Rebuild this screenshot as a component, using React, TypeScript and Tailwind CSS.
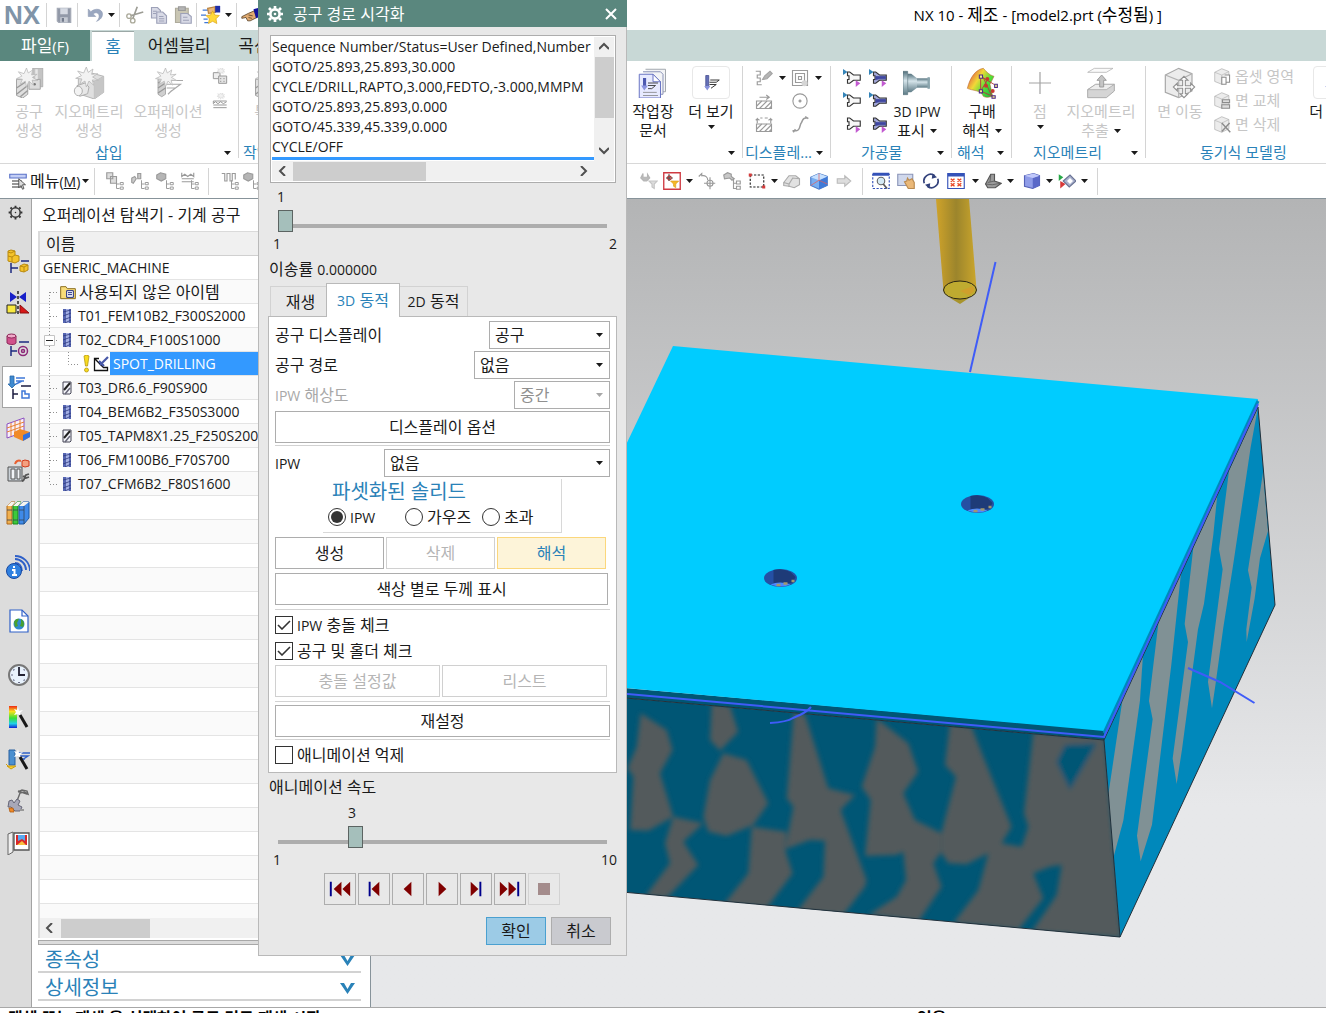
import { useState, type ReactNode } from 'react';
import clsx from 'clsx';

interface ChildrenProps {
  children: ReactNode;
}

interface IconProps {
  size?: number;
  className?: string;
  children: ReactNode;
}

// Every icon is drawn on a 24 unit grid
function Icon({ size = 18, className, children }: IconProps) {
  return (
    <svg
      width={size}
      height={size}
      viewBox="0 0 24 24"
      fill="none"
      stroke="#9a9a9a"
      strokeWidth="1.5"
      className={clsx('shrink-0', className)}
      aria-hidden="true"
    >
      {children}
    </svg>
  );
}

function Caret({ muted = false, className }: { muted?: boolean; className?: string }) {
  return (
    <svg width="7" height="4" viewBox="0 0 7 4" className={clsx('shrink-0', className)} aria-hidden="true">
      <path d="M0 0h7L3.500 4z" fill={muted ? '#a8a8a8' : '#1a1a1a'} />
    </svg>
  );
}

function Latin({ children, large = false }: ChildrenProps & { large?: boolean }) {
  return <span className={large ? 'text-[15px]' : 'text-[14px]'}>{children}</span>;
}

function Divider({ className }: { className?: string }) {
  return <span className={clsx('w-px shrink-0 bg-[#d4d4d4]', className)} />;
}

function Burst() {
  return (
    <path
      d="M10 0l1.400 4L15 1.500l-1 4 4.500-.5-3.800 2.500L19 10l-4.500-.3 1 4L12 10.500 10 15l-1-4.500L5 13l1.700-4L2 8.500l4.300-2L3.500 3 8 4.500z"
      fill="#f2f2f2"
      stroke="#b8b8b8"
      strokeWidth=".6"
    />
  );
}

/* ---------- quick access bar ---------- */

function SaveIcon() {
  return (
    <Icon size={18}>
      <path d="M3 3h18v19H5l-2-2z" fill="#9299a8" stroke="#a3a9b5" />
      <path d="M7 3h10v8H7z" fill="#d5d9e2" stroke="none" />
      <path d="M7 15h10v7H7z" fill="#c5cad3" stroke="none" />
      <path d="M9 16h3v5H9z" fill="#737b8c" stroke="none" />
    </Icon>
  );
}

function UndoIcon() {
  return (
    <Icon size={18}>
      <path d="M3 4v10h10L9.500 10.500c4-3 8-1 8 3 0 3-1.500 5-3.500 7 5-2 8-5.500 8-9.500C22 4 13 2 6.500 7.500z" fill="#9aa7c0" stroke="#8f9bb4" strokeWidth=".8" />
    </Icon>
  );
}

function CutIcon() {
  return (
    <Icon size={18}>
      <path d="M15 1L9 17M23 8L6 13" stroke="#9c9c94" strokeWidth="2.200" />
      <circle cx="4" cy="13.500" r="3" stroke="#aaa99a" strokeWidth="1.800" />
      <circle cx="9" cy="19.500" r="3" stroke="#aaa99a" strokeWidth="1.800" />
    </Icon>
  );
}

function CopyIcon() {
  return (
    <Icon size={18}>
      <path d="M2 2h8l4 4v10H2z" fill="#d8dae6" stroke="#9da1b8" />
      <path d="M9 8h8l5 5v10H9z" fill="#d8dae6" stroke="#9da1b8" />
      <path d="M4 7h5M4 10h4M12 14h6M12 17h7M12 20h7" stroke="#9da1b8" />
    </Icon>
  );
}

function PasteIcon() {
  return (
    <Icon size={18}>
      <path d="M2 3h17v19H2z" fill="#c9c6b4" stroke="#aeab9c" />
      <path d="M6 1h9v5H6z" fill="#b5b5b5" stroke="#999" />
      <path d="M9 10h9l5 4v9H9z" fill="#d8dae6" stroke="#9da1b8" />
      <path d="M12 15h6M12 19h8" stroke="#9da1b8" />
    </Icon>
  );
}

function StarHandIcon() {
  return (
    <Icon size={20}>
      <path d="M2 6h7M0 12h6M3 17h5M4 21h5" stroke="#3f78d8" />
      <path d="M8 4l9-2v7l-8 1z" fill="#edb878" stroke="#b98340" />
      <path d="M17 1h6v8h-6z" fill="#1f2ea8" stroke="none" />
      <path d="M14 7l2.600 5 5.400.6-4 4 1 5.600-5-2.600-5 2.600 1-5.600-4-4 5.400-.6z" fill="#ffd83a" stroke="#d8a010" strokeWidth=".8" />
    </Icon>
  );
}

function HandIcon() {
  return (
    <Icon size={20}>
      <path d="M1 14l8-4 7-3 3 8-8 4H8l-2-4-5 1z" fill="#e0aa70" stroke="#5a4228" strokeWidth="1" />
      <path d="M9 12l5 1M9 15l4 1" stroke="#5a4228" strokeWidth="1" />
      <path d="M15 5l8-2v11l-5 2z" fill="#12129c" stroke="none" />
    </Icon>
  );
}

/* ---------- ribbon icons ---------- */

function CreateToolIcon() {
  return (
    <Icon size={30}>
      <path d="M15 0h8v15h-8z" fill="#c4c4c4" stroke="#a5a5a5" strokeWidth=".6" />
      <path d="M18 1v14" stroke="#e8e8e8" strokeWidth="2" />
      <path d="M12 10l9-1v8h-9z" fill="#dcdcdc" stroke="#a5a5a5" strokeWidth=".8" />
      <circle cx="16.500" cy="13" r="1" fill="#777" stroke="none" />
      <path d="M2 9h9v12l-4 3-5-2z" fill="#dfdfdf" stroke="#a5a5a5" strokeWidth=".8" />
      <path d="M2 16l9-6M2 21l9-7M5 23l6-5" stroke="#9b9b9b" strokeWidth="1.200" />
      <Burst />
    </Icon>
  );
}

function CreateGeometryIcon() {
  return (
    <Icon size={32}>
      <path d="M4 8l8-4 11 3v12l-7 5-12-4z" fill="#dfdfdf" stroke="#b2b2b2" strokeWidth=".7" />
      <path d="M4 8l12 3v13M16 11l7-4" stroke="#b8b8b8" strokeWidth=".7" />
      <path d="M16 11l7-4v12l-7 5z" fill="#c6c6c6" stroke="none" />
      <path d="M3 14l6-2 3 3-1 5-6 2z" fill="#e8e8e8" stroke="#aaa" strokeWidth=".7" />
      <ellipse cx="4" cy="18" rx="3" ry="3.500" fill="#f3f3f3" stroke="#aaa" strokeWidth=".7" />
      <Burst />
    </Icon>
  );
}

function CreateOperationIcon() {
  return (
    <Icon size={30}>
      <path d="M4 8h6v13l-3 2-3-2z" fill="#cfcfcf" stroke="#a5a5a5" strokeWidth=".7" />
      <path d="M4 12l6-3M4 16l6-4M4 20l6-4" stroke="#979797" strokeWidth="1" />
      <path d="M11 10h13M11 13h11l-8 6M11 16h7M12 21l3-3" stroke="#a9a9a9" strokeWidth=".9" />
      <Burst />
    </Icon>
  );
}

function SmallProgramIcon({ wave = false }: { wave?: boolean }) {
  return (
    <Icon size={16}>
      {wave ? (
        <path d="M2 12h20M2 12v4l3-3 4 3 4-3 4 3 5-3M2 22h20M2 18h20" />
      ) : (
        <>
          <path d="M2 7h10v9H2z" fill="#eee" />
          <path d="M10 12h12v11H10z" fill="#e4e4e4" />
          <path d="M12 16h2M17 16h2M12 20h2M17 20h2" />
        </>
      )}
      <g transform="translate(6 -1) scale(.7)">
        <Burst />
      </g>
    </Icon>
  );
}

function ShopDocIcon() {
  return (
    <Icon size={30}>
      <path d="M6 1h16v18h-4" stroke="#a3a8ae" fill="#f3f4f6" strokeWidth=".8" />
      <path d="M4 3h14l2 2v16h-2" stroke="#8b93b8" fill="#f3f4f6" strokeWidth=".8" />
      <path d="M1 5h11l6 6v13H1z" fill="#e7eaff" stroke="#6a75c4" strokeWidth=".8" />
      <path d="M12 5l6 6h-6z" fill="#fff" stroke="#6a75c4" strokeWidth=".8" />
      <path d="M4 8h2.500v8H4z" fill="#4c58b0" stroke="none" />
      <path d="M2.500 14h5.500l-3 4z" fill="#8a93e0" stroke="none" />
      <path d="M8 12h8M8 14h6l-3 2.500H8" stroke="#333" strokeWidth=".7" />
      <path d="M4 19.500h11M4 22h12" stroke="#7b7b7b" strokeWidth=".6" />
    </Icon>
  );
}

function MoreOperationIcon() {
  return (
    <Icon size={18}>
      <path d="M5 2h4v16H5z" fill="#6470b8" stroke="#40488c" strokeWidth="1" />
      <path d="M3 16h8l-4 6z" fill="#8993dd" stroke="none" />
      <path d="M11 8h12l-4 3h-9M10 14h9l-7 5" stroke="#333" strokeWidth="1.300" />
    </Icon>
  );
}

function PathListIcon() {
  return (
    <Icon size={18}>
      <path d="M1 3h6v5H3v4h4v5H3v4h6" stroke="#9a9a9a" />
      <path d="M10 14l3-5 7-6 3 3-7 7z" fill="#b5b5b5" stroke="#a5a5a5" />
    </Icon>
  );
}

function SpiralIcon() {
  return (
    <Icon size={18}>
      <path d="M2 2h20v20H2zM6 6h12v12H6zM10 10h4v4h-4z" />
      <circle cx="18" cy="19" r="4" fill="#d5d5d5" stroke="none" />
    </Icon>
  );
}

function HatchIcon({ wide = false }: { wide?: boolean }) {
  return (
    <Icon size={18}>
      <path d="M2 12h20v10H2z" />
      <path d="M2 19l7-7M6 22l10-10M13 22l9-9M19 22l3-3" />
      <path d={wide ? 'M3 11V5l-2 2m2-2l3 2M21 11V5l2 2m-2-2l-3 2M7 4h3M13 4h4' : 'M6 7h13M15 4l4 3-4 3'} />
    </Icon>
  );
}

function CircleDotIcon() {
  return (
    <Icon size={18}>
      <circle cx="12" cy="12" r="9.500" />
      <path d="M12 10v4M10 12h4" strokeWidth="2" />
    </Icon>
  );
}

function CurveIcon() {
  return (
    <Icon size={18}>
      <path d="M2 21h5c6 0 4-8 7-11 2-3 1-6 6-6h3M3 23l3-4M19 2l4 3" strokeWidth="2" />
    </Icon>
  );
}

function WorkpieceIcon({ filled = false, blue = true, pink = true }: { filled?: boolean; blue?: boolean; pink?: boolean }) {
  return (
    <Icon size={18}>
      <path d="M6 4h3l5 4h9v7h-9l-5 4H6v-5h2V9H6z" fill={filled ? '#a3a8d8' : '#f7f7f7'} stroke="#333" strokeWidth="1.500" />
      {filled && <path d="M9 10l5 0h8v3h-8l-5 1z" fill="#3f46a0" stroke="#3f46a0" strokeWidth="1" />}
      {blue && <path d="M0 0l6 4-6 4z" fill="#3484b8" stroke="none" />}
      {pink && <path d="M17 15l6 4-6 5z" fill="#c25ad0" stroke="none" />}
    </Icon>
  );
}

function IpwIcon() {
  return (
    <Icon size={28}>
      <defs>
        <linearGradient id="steel" x1="0" x2="0" y1="0" y2="1">
          <stop offset="0" stopColor="#52707c" />
          <stop offset=".4" stopColor="#d5e4ea" />
          <stop offset="1" stopColor="#5d7b86" />
        </linearGradient>
      </defs>
      <path d="M8 8h15v8H8z" fill="url(#steel)" stroke="none" />
      <path d="M4 4h3l5 4v8l-5 4H4z" fill="url(#steel)" stroke="none" />
      <path d="M0 2h4v20H0z" fill="url(#steel)" stroke="#506b75" strokeWidth=".5" />
      <path d="M21 7h2v10h-2z" fill="#8aa4ad" stroke="none" />
    </Icon>
  );
}

function DraftAnalysisIcon() {
  return (
    <Icon size={32}>
      <defs>
        <linearGradient id="rainbow" x1="0" x2="1" y1=".2" y2=".9">
          <stop offset="0" stopColor="#e04848" />
          <stop offset=".35" stopColor="#f2d838" />
          <stop offset=".65" stopColor="#4ee038" />
          <stop offset="1" stopColor="#20b040" />
        </linearGradient>
      </defs>
      <path d="M1 16C3 8 7 2 13 1c2 2 4 5 8 6l-3 6 2 9c-4 1-5 1-7 0-2-5-8-4-12-6z" fill="url(#rainbow)" stroke="#b7652c" strokeWidth=".4" />
      <path d="M11 7l10 6M11 7v11l9 4M13 8l6 13M11 18l5-8" stroke="#b43a3a" strokeWidth=".7" />
      <g fill="#c73a30" stroke="none">
        <circle cx="16" cy="9" r="1.500" />
        <circle cx="15" cy="14" r="1.500" />
        <circle cx="20" cy="18" r="1.500" />
      </g>
      <g fill="#f5e98a" stroke="#4c2a88" strokeWidth=".8">
        <path d="M10 6h2.400v2.400H10zM10 17h2.400v2.400H10zM21.500 13h2v2.400h-2zM19.500 21.500h2.400v2h-2.400z" />
      </g>
    </Icon>
  );
}

function PointIcon() {
  return (
    <Icon size={24}>
      <path d="M12 1v22M1 12h22" stroke="#a3a3a3" strokeWidth="1.200" />
    </Icon>
  );
}

function ExtractIcon() {
  return (
    <Icon size={32}>
      <path d="M2 4l5-3h14l-5 3z" fill="#fafafa" stroke="#b5b5b5" strokeWidth=".6" />
      <path d="M2 17l6-4h14v5l-6 5H2z" fill="#d5d5d5" stroke="#a8a8a8" strokeWidth=".7" />
      <path d="M2 17l6-4h14l-6 4z" fill="#ededed" stroke="#a8a8a8" strokeWidth=".6" />
      <path d="M11 15v-5H9l3.500-4L16 10h-2v5z" fill="#c5c5c5" stroke="#999" strokeWidth=".7" />
    </Icon>
  );
}

function CubeShape() {
  return (
    <>
      <path d="M1 6l10-5 10 4v13l-10 5-10-4z" fill="#ececec" stroke="#a8a8a8" strokeWidth=".9" />
      <path d="M1 6l10 4 10-5M11 10v13" stroke="#b2b2b2" strokeWidth=".9" />
    </>
  );
}

function MoveFaceIcon() {
  return (
    <Icon size={32}>
      <CubeShape />
      <path d="M15 7l3 3h-2v4h4v-2l3 3-3 3v-2h-4v4h2l-3 3-3-3h2v-4h-4v2l-3-3 3-3v2h4v-4h-2z" fill="#fff" stroke="#8f8f8f" strokeWidth=".8" />
    </Icon>
  );
}

function FaceIcon({ mark }: { mark: 'offset' | 'replace' | 'delete' }) {
  return (
    <Icon size={17}>
      <CubeShape />
      {mark === 'offset' && <path d="M11 13h6v10h-6zM15 10h7v10h-5" fill="#fff" stroke="#8c8c8c" />}
      {mark === 'replace' && <path d="M12 11h10v4H12zM11 18h11v5H11z" fill="#ddd" stroke="#8c8c8c" />}
      {mark === 'delete' && <path d="M11 10l12 13M22 10L11 22" stroke="#8c8c8c" strokeWidth="2" />}
    </Icon>
  );
}

function NodeIcon({ kind }: { kind: number }) {
  return (
    <Icon size={18}>
      {kind === 0 && <path d="M1 1h8v8H1zM6 6h8v9H6z" fill="#ddd" />}
      {kind === 1 && <path d="M1 14V8l4-2 2 3-4 6zM9 2h4v7H9z" fill="#ccc" />}
      {kind === 2 && <path d="M1 4l5-3 7 2v6l-6 3-6-3z" fill="#b5b5b5" />}
      {kind === 3 && <path d="M1 1v5l4-3 4 3 4-3 4 3V1M1 13h16M1 9h16" />}
      {kind === 4 && <path d="M1 2h4v10h3V2h4v10h3V2h4v8" />}
      <path d="M14 11v11h4M14 16h4M19 14h4v3h-4zM19 20h4v3h-4z" strokeWidth="1.300" />
    </Icon>
  );
}

/* ---------- header ---------- */

function TitleBar() {
  return (
    <div className="flex h-[30px] shrink-0 items-center bg-white pl-1 text-black">
      <span className="w-[42px] font-['Liberation_Sans',sans-serif] text-[26px] leading-none font-bold text-[#8094a8]">NX</span>
      <Divider className="h-6" />
      <button className="ml-2" aria-label="저장"><SaveIcon /></button>
      <Divider className="ml-1 h-6" />
      <button className="ml-2" aria-label="실행 취소"><UndoIcon /></button>
      <Caret className="ml-1" />
      <Divider className="ml-1 h-6" />
      <button className="ml-1.5" aria-label="잘라내기"><CutIcon /></button>
      <button className="ml-1.5" aria-label="복사"><CopyIcon /></button>
      <button className="ml-1.5" aria-label="붙여넣기"><PasteIcon /></button>
      <Divider className="ml-1 h-6" />
      <button className="ml-1" aria-label="명령"><StarHandIcon /></button>
      <Caret className="ml-1" />
      <Divider className="ml-1 h-6" />
      <button className="ml-1" aria-label="선택"><HandIcon /></button>
      <h1 className="mr-[164px] ml-auto text-[17px] whitespace-nowrap">
        <Latin large>NX 10 - </Latin>제조<Latin large> - [model2.prt (</Latin>수정됨<Latin large>) ]</Latin>
      </h1>
    </div>
  );
}

function RibbonTabs() {
  return (
    <nav className="flex h-[31px] shrink-0 bg-[#c8d8d6] text-[17px]">
      <button className="mr-0.5 w-[90px] bg-[#5a877e] text-white">파일<Latin large>(F)</Latin></button>
      <button className="mt-px w-[42px] border-t border-[#9ba8a6] bg-white text-[#2a82b8]">홈</button>
      <button className="w-[90px] whitespace-nowrap">어셈블리</button>
      <button className="w-[60px] whitespace-nowrap">곡선</button>
    </nav>
  );
}

interface RibbonGroupProps {
  label: string;
  className: string;
  labelClass?: string;
  caret?: boolean;
  children: ReactNode;
}

function RibbonGroup({ label, className, labelClass = 'justify-center', caret = true, children }: RibbonGroupProps) {
  return (
    <section className={clsx('relative flex shrink-0 flex-col pt-[5px]', className)}>
      <div className="flex h-[76px]">{children}</div>
      <div className={clsx('flex h-5 items-center text-[15px] leading-5 text-[#2a82b8]', labelClass)}>
        <h2>{label}</h2>
      </div>
      {caret && <Caret className="absolute right-2 bottom-2" />}
      <Divider className="absolute top-[5px] right-0 h-[92px]" />
    </section>
  );
}

interface BigButtonProps {
  icon: ReactNode;
  lines: ReactNode[];
  className: string;
  disabled?: boolean;
  caret?: boolean;
  framed?: boolean;
}

function BigButton({ icon, lines, className, disabled, caret, framed }: BigButtonProps) {
  return (
    <button
      disabled={disabled}
      className={clsx('flex shrink-0 flex-col items-center text-[15px] leading-[19px] whitespace-nowrap', disabled ? 'text-[#c6c6c6]' : 'text-[#1a1a1a]', className)}
    >
      <span className={clsx('mb-[3px] flex h-[33px] items-center justify-center', framed && 'w-[38px] rounded-sm border border-[#e8e8e8]')}>{icon}</span>
      {lines.map((line, i) => (
        <span key={i} className="flex items-center gap-[5px]">
          {line}
          {caret && i > 0 && i === lines.length - 1 && <Caret />}
        </span>
      ))}
      {caret && lines.length === 1 && <Caret className="mt-1" />}
    </button>
  );
}

function Ribbon() {
  return (
    <div className="flex h-[103px] shrink-0 overflow-hidden border-b border-[#d8d8d8] bg-white">
      <RibbonGroup label="삽입" className="w-[239px]" labelClass="pl-[95px]">
        <BigButton className="w-[58px]" disabled icon={<CreateToolIcon />} lines={['공구', '생성']} />
        <BigButton className="w-[62px]" disabled icon={<CreateGeometryIcon />} lines={['지오메트리', '생성']} />
        <BigButton className="ml-[17px] w-[62px]" disabled icon={<CreateOperationIcon />} lines={['오퍼레이션', '생성']} />
        <div className="ml-[13px] flex flex-col gap-[9px] pt-0.5">
          <SmallProgramIcon />
          <SmallProgramIcon wave />
        </div>
      </RibbonGroup>

      <RibbonGroup label="작업" className="w-[504px]" labelClass="pl-1">
        <BigButton className="w-[58px]" disabled icon={<CreateToolIcon />} lines={['특성']} />
        <BigButton className="ml-auto w-[58px]" icon={<ShopDocIcon />} lines={['작업장', '문서']} />
        <BigButton className="mr-[3px] w-[58px]" framed caret icon={<MoreOperationIcon />} lines={['더 보기']} />
      </RibbonGroup>

      <RibbonGroup label="디스플레..." className="w-[88px]" labelClass="pl-0.5">
        <div className="ml-3 grid h-[70px] grid-cols-[30px_20px] items-center gap-x-[6px]">
          <span className="flex items-center gap-1.5"><PathListIcon /><Caret /></span>
          <span className="flex items-center gap-1.5"><SpiralIcon /><Caret /></span>
          <HatchIcon />
          <CircleDotIcon />
          <HatchIcon wide />
          <CurveIcon />
        </div>
      </RibbonGroup>

      <RibbonGroup label="가공물" className="w-[121px]" labelClass="pl-[30px]">
        <div className="ml-3 grid h-[70px] grid-cols-[18px_18px] items-center gap-x-2">
          <WorkpieceIcon />
          <WorkpieceIcon filled />
          <WorkpieceIcon pink={false} />
          <WorkpieceIcon filled pink={false} />
          <WorkpieceIcon blue={false} />
          <WorkpieceIcon filled blue={false} />
        </div>
        <BigButton className="ml-px w-[58px]" caret icon={<IpwIcon />} lines={[<Latin key="ipw">3D IPW</Latin>, '표시']} />
      </RibbonGroup>

      <RibbonGroup label="해석" className="w-[60px]" labelClass="pl-[5px]">
        <BigButton className="w-[60px]" caret icon={<DraftAnalysisIcon />} lines={['구배', '해석']} />
      </RibbonGroup>

      <RibbonGroup label="지오메트리" className="w-[134px]" labelClass="pl-[21px]">
        <BigButton className="w-[56px]" disabled caret icon={<PointIcon />} lines={['점']} />
        <BigButton className="w-[66px]" disabled caret icon={<ExtractIcon />} lines={['지오메트리', '추출']} />
      </RibbonGroup>

      <RibbonGroup label="동기식 모델링" className="w-[230px]" labelClass="pl-[54px]" caret={false}>
        <BigButton className="w-[68px]" disabled icon={<MoveFaceIcon />} lines={['면 이동']} />
        <div className="flex h-[68px] w-[88px] flex-col justify-between text-[15px] leading-5 whitespace-nowrap text-[#c6c6c6]">
          <button disabled className="flex items-center gap-1"><FaceIcon mark="offset" />옵셋 영역</button>
          <button disabled className="flex items-center gap-1"><FaceIcon mark="replace" />면 교체</button>
          <button disabled className="flex items-center gap-1"><FaceIcon mark="delete" />면 삭제</button>
        </div>
        <BigButton className="ml-px w-[58px]" framed caret icon={<MoreOperationIcon />} lines={['더 보기']} />
      </RibbonGroup>
    </div>
  );
}

function SelectionBar() {
  return (
    <div className="flex h-[35px] shrink-0 items-center overflow-hidden border-b border-[#87939a] bg-white">
      <button className="flex items-center pl-[9px] text-[16px] whitespace-nowrap">
        <Icon>
          <path d="M1 3h22v5H1z" fill="#c3cef5" stroke="#5a72c8" />
          <path d="M4 12h13M4 16h13M4 20h13" stroke="#333" />
          <path d="M13 9v12l3-3 2 5 2-1-2-5h4z" fill="#ddd" stroke="#333" strokeWidth="1" />
        </Icon>
        <span className="ml-[3px]">메뉴<Latin>(<u>M</u>)</Latin></span>
        <Caret className="ml-0.5" />
      </button>
      <Divider className="ml-[5px] h-[27px]" />
      <div className="ml-[11px] flex gap-[7px]">
        {[0, 1, 2, 3].map(kind => <NodeIcon key={kind} kind={kind} />)}
      </div>
      <Divider className="ml-[9px] h-[27px]" />
      <div className="ml-3 flex gap-1">
        <NodeIcon kind={4} />
        <NodeIcon kind={2} />
      </div>

      <div className="ml-[379px] flex shrink-0 items-center gap-[5px]">
        <Icon>
          <path d="M4 2v5h6V3l3 5-4 4H5L1 8z" fill="#bbb" stroke="#b5b5b5" />
          <path d="M12 12h11l-4 4v6l-3-2v-4z" fill="#ddd" stroke="#c5c5c5" />
        </Icon>
        <Icon>
          <path d="M1 1h22v22H1z" stroke="#cf3a42" strokeWidth="1.800" />
          <path d="M8 3v9M4 8h9" stroke="#333" />
          <circle cx="8.500" cy="8" r="2.500" stroke="#b03838" />
          <path d="M10 12h11l-4 4v5l-3-2v-3z" fill="#f4b828" stroke="#d89818" strokeWidth=".8" />
        </Icon>
        <Caret />
        <Icon>
          <path d="M1 6l4-4v3c5-1 8 2 8 6M16 7v16M8 15h15" stroke="#999" />
          <circle cx="16" cy="15" r="4" />
        </Icon>
        <Icon className="ml-0.5">
          <path d="M1 4l5-3 5 2v3l4 3-3 2-3-3-7 1z" fill="#c8c8c8" />
          <path d="M14 9v13h4M14 15h4M18 12h5v4h-5zM18 19h5v4h-5z" />
        </Icon>
        <Icon className="ml-0.5">
          <path d="M3 4h18v16H3z" stroke="#222" strokeDasharray="3 2" />
          <path d="M1 2h4v4H1zM19 18h4v4h-4z" fill="#d63a3a" stroke="none" />
        </Icon>
        <Caret />
        <Icon>
          <path d="M1 14l7-9h9l5 4v8l-7 4-7-2-7-1z" fill="#e2e2e2" stroke="#aaa" />
          <path d="M1 14l7 2 5-8 9 1M8 16v4M13 8l-5 8" stroke="#aaa" />
        </Icon>
        <Icon className="ml-1">
          <path d="M1 7l11-5 11 4v12l-11 5-11-5z" fill="#79aef0" stroke="#4a7ac8" />
          <path d="M12 11l11-5v12l-11 5z" fill="#3f7ad8" stroke="none" />
          <path d="M1 7l11-5 11 4-11 5z" fill="#c5e0ff" stroke="none" />
          <path d="M12 2v9L1 18M12 11l11 5" stroke="#e06060" strokeWidth="1" />
        </Icon>
        <Icon className="ml-0.5">
          <path d="M3 9h10V5l8 7-8 7v-4H3z" fill="#ddd" stroke="#bbb" />
        </Icon>
        <Divider className="mx-1 h-[27px]" />
        <Icon>
          <path d="M1 3h22v19H1z" stroke="#3452b8" strokeDasharray="3 2" />
          <path d="M1 1h22v4H1z" fill="#3452b8" stroke="none" />
          <circle cx="12" cy="12" r="5" fill="#d5eaf5" stroke="#666" />
          <path d="M15 16l5 6" stroke="#555" strokeWidth="2.200" />
        </Icon>
        <Icon className="ml-0.5">
          <path d="M1 3h20v15H1z" fill="#d0d8ec" stroke="#8b95b8" />
          <path d="M10 13l3-1 1-4 2 3 4-2 3 5v8h-8z" fill="#eab878" stroke="#b98a50" />
        </Icon>
        <Icon className="ml-0.5">
          <path d="M3 15a9 9 0 0 1 14-10M21 9a9 9 0 0 1-14 10" stroke="#33427c" strokeWidth="2.200" />
          <path d="M14 2l6 5-7 2zM10 22l-6-5 7-2z" fill="#33427c" stroke="none" />
        </Icon>
        <Icon className="ml-0.5">
          <path d="M1 2h22v20H1z" fill="#fff" stroke="#3452b8" />
          <path d="M1 2h22v4H1z" fill="#3452b8" stroke="none" />
          <path d="M5 9l5 4M10 9l-5 4M14 9l5 4M19 9l-5 4M5 15l5 4M10 15l-5 4M14 15l5 4M19 15l-5 4" stroke="#e84828" strokeWidth="2" />
        </Icon>
        <Caret className="ml-0.5" />
        <Icon>
          <path d="M2 16l7-13 5 0v9l9 3-8 6H5z" fill="#9a9a9a" stroke="#555" />
          <path d="M5 14l9-2M2 16l9 1 11-2M9 3L8 13" stroke="#555" strokeWidth="1" />
        </Icon>
        <Caret />
        <Icon className="ml-1">
          <path d="M2 5l12-3 8 3v13l-9 4-11-3z" fill="#8f9ce8" stroke="#5562b8" />
          <path d="M13 8l9-3v13l-9 4z" fill="#5a68c8" stroke="none" />
          <path d="M2 5l12-3 8 3-9 3z" fill="#c0c8fa" stroke="none" />
        </Icon>
        <Caret />
        <Icon>
          <path d="M1 3l6 4-6 5z" fill="#28a848" stroke="none" />
          <path d="M3 12l7 4-7 6z" fill="#d83838" stroke="none" />
          <path d="M7 12l9-8 8 8-9 8z" fill="#a8b0cc" stroke="#6a7394" />
          <path d="M12 12l4-4 4 4-4 4z" fill="#fff" stroke="none" />
        </Icon>
        <Caret />
        <Divider className="ml-1 h-[27px]" />
      </div>
    </div>
  );
}

/* ---------- resource bar ---------- */

const resourceIcons: { label: string; active?: boolean; gap?: boolean; art: ReactNode }[] = [
  {
    label: '어셈블리 탐색기',
    art: (
      <>
        <path d="M2 2l3-1 4 1v4l4 1v5l-4 2-7-2z" fill="#f4c32c" stroke="#b98a10" strokeWidth="1" />
        <path d="M2 7l4 1 3-2M6 8v5M2 3l3 1 4-2" stroke="#b98a10" strokeWidth="1" />
        <path d="M5 14v10M5 19h7M15 12h8" stroke="#1c2a80" />
        <path d="M14 17l4-2 4 1v5l-4 2-4-1z" fill="#f4c32c" stroke="#b98a10" strokeWidth="1" />
        <path d="M14 17l4 1 4-2M18 18v5" stroke="#b98a10" strokeWidth="1" />
      </>
    ),
  },
  {
    label: '구속조건 탐색기',
    art: (
      <>
        <path d="M4 1l7 5-7 5zM20 1l-7 5 7 5z" fill="#1820c8" stroke="none" />
        <path d="M12 0v24" stroke="#222" strokeDasharray="3 2" />
        <path d="M1 14h9v8H1z" fill="#f8e840" stroke="#222" strokeWidth="1" />
        <path d="M14 14v8h9z" fill="#d81818" stroke="#8c1010" strokeWidth="1" />
      </>
    ),
  },
  {
    label: '파트 탐색기',
    art: (
      <>
        <path d="M1 3v7c2 2 8 2 9 0V3z" fill="#d0508c" stroke="#8c2858" strokeWidth="1" />
        <ellipse cx="5.500" cy="3" rx="4.500" ry="2" fill="#f0a8c8" stroke="#8c2858" strokeWidth="1" />
        <path d="M5 13v10M5 18h6M13 9h10" stroke="#1c2a80" />
        <circle cx="17" cy="18" r="4.500" stroke="#8c2878" />
        <circle cx="17" cy="18" r="1.500" stroke="#8c2878" />
      </>
    ),
  },
  {
    label: '오퍼레이션 탐색기',
    active: true,
    art: (
      <>
        <path d="M2 1h4v8h2l-4 4-4-4h2z" fill="#3f8ad0" stroke="#2868a8" strokeWidth=".8" />
        <path d="M8 3h9M8 6h8M8 9l6-3" stroke="#3f78d8" />
        <path d="M5 14v10M5 19h5M13 11h10" stroke="#1c1c40" />
        <path d="M14 16h3v3h4v4h-7z" stroke="#3f78d8" />
      </>
    ),
  },
  {
    label: '머시닝 피처 탐색기',
    art: (
      <>
        <path d="M1 7l17-6v14l-17 6z" fill="#f8f0f8" stroke="#8c50c0" strokeWidth="1" />
        <path d="M1 11l17-6M1 15l17-6M5 6v13M9 4v14M14 3v13" stroke="#e88030" strokeWidth="1" />
        <path d="M8 15l6-3 10 3v5l-7 4-9-4z" fill="#f08a28" stroke="none" />
        <path d="M17 18l7-3v5l-7 4z" fill="#2f70e0" stroke="none" />
      </>
    ),
  },
  {
    label: '머신 툴 탐색기',
    art: (
      <>
        <path d="M2 8h14v14H2z" fill="#c9d0d6" stroke="#555" strokeWidth="1" />
        <path d="M5 10h4v10H5zM11 10h3v10h-3z" fill="#f2f5f8" stroke="#555" strokeWidth="1" />
        <path d="M9 5c1-3 3-4 6-3" stroke="#e86030" strokeWidth="2" />
        <path d="M16 2l3-1 4 1v5l-4 1-3-1z" fill="#f4a080" stroke="#d03818" strokeWidth="1" />
        <path d="M16 22c3 0 2-4 4-6l3-1M17 17l3 2 3-1" stroke="#555" strokeWidth="1.800" />
      </>
    ),
  },
  {
    label: '재사용 라이브러리',
    art: (
      <>
        <path d="M1 5l4-4h4L6 5v18H1z" fill="#f0b050" stroke="#b06818" strokeWidth="1" />
        <path d="M7 5l4-4h4l-3 4v18H7z" fill="#3cc83c" stroke="#188818" strokeWidth="1" />
        <path d="M13 5l4-4h6v16l-5 6h-5z" fill="#3f8ae8" stroke="#1858a8" strokeWidth="1" />
        <path d="M1 5l4-4h4L6 5zM7 5l4-4h4l-3 4zM13 5l4-4h6l-5 4z" fill="#f5f5f0" stroke="none" />
        <path d="M1 9h5M1 19h5M7 9h5M7 19h5M13 9h5M13 19h5M18 5v18" stroke="#345" strokeWidth=".8" />
      </>
    ),
  },
  {
    label: 'HD3D 도구',
    gap: true,
    art: (
      <>
        <path d="M9 8c4 0 7 3 7 8M9 4c6 0 11 5 11 11M9 1c8 0 15 6 15 15" stroke="#2f60c8" strokeWidth="1.800" />
        <circle cx="8" cy="16" r="7.500" fill="#2f80e0" stroke="#1848a0" strokeWidth="1" />
        <path d="M8 11v2M6 15h2.500v5M6 20h5" stroke="#fff" strokeWidth="2" />
      </>
    ),
  },
  {
    label: '웹 브라우저',
    gap: true,
    art: (
      <>
        <path d="M4 1h12l6 6v16H4z" fill="#fff" stroke="#2f60c8" strokeWidth="1.200" />
        <path d="M16 1v6h6" stroke="#2f60c8" strokeWidth="1.200" />
        <circle cx="13" cy="15" r="5.500" fill="#2f8ad0" stroke="none" />
        <path d="M8 13c1-3 4-4 5-3l-2 4 1 3-3 1zM15 10c3 2 4 5 2 8l-3-1 1-3z" fill="#48a030" stroke="none" />
      </>
    ),
  },
  {
    label: '히스토리',
    gap: true,
    art: (
      <>
        <circle cx="13" cy="12" r="10" fill="#e8f2fc" stroke="#777" strokeWidth="2" />
        <path d="M13 4v8h6" stroke="#223" strokeWidth="1.800" />
        <path d="M13 20v-1M5.500 12h1M7.500 6.500l.7.7M7.500 17.500l.7-.7M18.500 17.500l-.7-.7M18.500 6.500l-.7.7" stroke="#446" />
      </>
    ),
  },
  {
    label: '프로세스 스튜디오',
    art: (
      <>
        <defs>
          <linearGradient id="scale" x1="0" x2="0" y1="0" y2="1">
            <stop offset="0" stopColor="#f02818" />
            <stop offset=".25" stopColor="#f8e020" />
            <stop offset=".55" stopColor="#38e038" />
            <stop offset=".8" stopColor="#20d0e8" />
            <stop offset="1" stopColor="#1020d8" />
          </linearGradient>
        </defs>
        <path d="M3 1h8v22H3z" fill="url(#scale)" stroke="none" />
        <path d="M12 2l1 4 4-1-3 3 1 3-3-2-4 1 2-3-2-3 3 1z" fill="#fff" stroke="none" />
        <path d="M14 10l7 12" stroke="#181818" strokeWidth="3" />
      </>
    ),
  },
  {
    label: '제조 마법사',
    art: (
      <>
        <path d="M3 3h6v15H3z" fill="#4c90d0" stroke="#2860a0" strokeWidth="1" />
        <path d="M12 6h12M13 9h9l-6 4M15 12h4" stroke="#2f60c8" />
        <path d="M1 19h9l-5 3zM0 17l3 3" fill="#f8d030" stroke="#d0a010" strokeWidth="1" />
        <path d="M12 2l1 4 4-1-3 3 1 3-3-2-4 1 2-3-2-3 3 1z" fill="#fff" stroke="none" />
        <path d="M14 10l7 12" stroke="#181818" strokeWidth="3" />
      </>
    ),
  },
  {
    label: '역할',
    art: (
      <>
        <path d="M12 3l4-2 5 1 1 3-4-2-4 1-3 8M12 2l9 3" stroke="#666" strokeWidth="1.400" />
        <path d="M3 12l3-1 2 3 3-4 3 2-2 4 4 2-2 4-5 0-4-4-3 0z" fill="#a8a8b8" stroke="#667" strokeWidth="1" />
        <path d="M3 19l4 0 1 4-4 0z" fill="#f08a28" stroke="#b05a10" strokeWidth=".8" />
        <path d="M14 21h4" stroke="#999" strokeWidth="2" />
      </>
    ),
  },
  {
    label: '시스템 장면',
    art: (
      <>
        <path d="M2 3l5-2v20l-5 3z" fill="#eee" stroke="#666" strokeWidth="1" />
        <path d="M8 2h15v17H8z" fill="#fff" stroke="#555" strokeWidth="1.300" />
        <path d="M10 4h11v10H10z" fill="#d82828" stroke="none" />
        <path d="M12 4h7v6l-3-2-4 2z" fill="#58a8f0" stroke="none" />
        <path d="M11 14l5-4 4 4z" fill="#f8c040" stroke="none" />
      </>
    ),
  },
];

function ResourceBar() {
  return (
    <aside className="flex w-8 shrink-0 flex-col border-r border-[#a3a3a3] bg-[#dcdcdc]">
      <button className="mb-[15px] flex h-[26px] items-center justify-center" aria-label="설정">
        <Icon size={15}>
          <circle cx="12" cy="12" r="7.500" stroke="#333" strokeWidth="2.400" />
          <circle cx="12" cy="12" r="1.200" fill="#333" stroke="none" />
          <path d="M12 1v3M12 20v3M1 12h3M20 12h3M4 4l2 2M18 18l2 2M20 4l-2 2M6 18l-2 2" stroke="#333" strokeWidth="3" />
        </Icon>
      </button>
      {resourceIcons.map(item => (
        <button
          key={item.label}
          aria-label={item.label}
          className={clsx(
            'flex h-[42px] shrink-0 items-center justify-center pl-1',
            item.gap && 'mt-3',
            item.active && '-mr-px ml-0.5 border-y border-l border-[#a3a3a3] bg-white pl-0'
          )}
        >
          <Icon size={24}>{item.art}</Icon>
        </button>
      ))}
    </aside>
  );
}

/* ---------- operation navigator ---------- */

type ToolKind = 'mill' | 'drill';

const tools: { name: string; kind: ToolKind; open?: boolean }[] = [
  { name: 'T01_FEM10B2_F300S2000', kind: 'mill' },
  { name: 'T02_CDR4_F100S1000', kind: 'mill', open: true },
  { name: 'T03_DR6.6_F90S900', kind: 'drill' },
  { name: 'T04_BEM6B2_F350S3000', kind: 'mill' },
  { name: 'T05_TAPM8X1.25_F250S2000', kind: 'drill' },
  { name: 'T06_FM100B6_F70S700', kind: 'mill' },
  { name: 'T07_CFM6B2_F80S1600', kind: 'mill' },
];

function Branch({ first, last, open, child }: { first?: boolean; last?: boolean; open?: boolean; child?: boolean }) {
  return (
    <svg width={child ? 42 : 20} height="24" className="shrink-0" stroke="#8f8f8f" strokeDasharray="1 2" fill="none" aria-hidden="true">
      <path d={`M9.500 ${first ? 12 : 0}V${last ? 12 : 24}`} />
      {child ? <path d="M28.500 0v12.500h10" /> : <path d="M10 12.500h9" />}
      {open && (
        <g strokeDasharray="none">
          <path d="M4.500 7.500h10v10h-10z" fill="#fff" stroke="#c4c4c4" />
          <path d="M6 12.500h7" stroke="#222" />
        </g>
      )}
    </svg>
  );
}

function ToolIcon({ kind }: { kind: ToolKind }) {
  return (
    <svg width="10" height="14" viewBox="0 0 10 14" className="mr-1.5 ml-0.5 shrink-0" aria-hidden="true">
      {kind === 'mill' ? (
        <>
          <path d="M1 0h8v14H1z" fill="#5464b0" />
          <path d="M4 0h3v14H4z" fill="#a4b0e4" />
          <path d="M1 3l8-2M1 7l8-3M1 11l8-3M3 14l6-3" stroke="#2e3a7c" strokeWidth=".8" />
        </>
      ) : (
        <>
          <path d="M1 1h8v11l-1 1H1z" fill="#f4f5fa" stroke="#445" />
          <path d="M2 9l6-7" stroke="#222" strokeWidth="2" />
          <path d="M3 13l5-6" stroke="#667" strokeWidth="1.500" />
        </>
      )}
    </svg>
  );
}

const rowClass = 'flex h-6 shrink-0 items-center overflow-hidden border-b border-[#e4e4e4] whitespace-nowrap odd:bg-white even:bg-[#fafafa]';

function OperationNavigator() {
  return (
    <section className="flex w-[339px] shrink-0 flex-col border-r border-[#87939a] bg-white pl-1.5">
      <h2 className="h-8 pl-1 text-[16px] leading-8">오퍼레이션 탐색기 - 기계 공구</h2>
      <div className="flex min-h-0 flex-1 flex-col border-t border-l-2 border-[#dadada]">
        <div className="h-6 shrink-0 border-b border-[#d0d0d0] bg-[#f0f0f0] pl-1.5 text-[16px] leading-6">이름</div>
        <ul className="min-h-0 flex-1 overflow-hidden text-[14px]">
          <li className={clsx(rowClass, 'pl-[3px]')}>GENERIC_MACHINE</li>
          <li className={rowClass}>
            <Branch first />
            <Icon size={16} className="mr-[3px]">
              <path d="M1 4h8l2 3h12v15H1z" fill="#f8dc78" stroke="#8c7020" />
              <path d="M10 10h10v10H10z" fill="#fff" stroke="#1c2a80" />
              <path d="M12 13h6M12 16h6" stroke="#1c2a80" />
            </Icon>
            <span className="text-[16px]">사용되지 않은 아이템</span>
          </li>
          {tools.flatMap((tool, i) => {
            const row = (
              <li key={tool.name} className={rowClass}>
                <Branch open={tool.open} last={i === tools.length - 1} />
                <ToolIcon kind={tool.kind} />
                {tool.name}
              </li>
            );
            if (!tool.open) return [row];
            return [
              row,
              <li key="spot" className={rowClass}>
                <Branch child />
                <svg width="28" height="18" viewBox="0 0 28 18" className="shrink-0" aria-hidden="true">
                  <path d="M2 1q2.500-2 5 0L5.500 11h-2z" fill="#f8dc20" stroke="#b89810" strokeWidth=".8" />
                  <circle cx="4.500" cy="15" r="2" fill="#f8dc20" stroke="#b89810" strokeWidth=".8" />
                  <path d="M17 3.500h-4.500v12h13v-3h-4l-9-9" stroke="#111" strokeWidth="1.300" fill="none" />
                  <path d="M26 2l-8 8M17 6l5 5" stroke="#4858a8" strokeWidth="2.200" />
                </svg>
                <span className="flex-1 self-stretch bg-[#3399ff] pl-[3px] leading-6 text-white">SPOT_DRILLING</span>
              </li>,
            ];
          })}
          {Array.from({ length: 19 }, (_, i) => <li key={i} className={rowClass} />)}
        </ul>
        <div className="flex h-5 shrink-0 items-center bg-[#f0f0f0]">
          <svg width="21" height="10" viewBox="0 0 21 10" aria-hidden="true">
            <path d="M12 0L7 5l5 5" fill="none" stroke="#505050" strokeWidth="2" />
          </svg>
          <span className="h-[19px] w-[89px] bg-[#cdcdcd]" />
        </div>
      </div>
      <div className="mt-0.5 h-[5px] shrink-0 border border-[#a8a8a8] bg-[#dcdcdc]" />
      {['종속성', '상세정보'].map(title => (
        <button key={title} className="mr-[9px] flex h-7 shrink-0 items-center justify-between border-b-2 border-[#d2d2d2] pt-1 pr-1.5 pl-[7px] text-[20px] leading-6 text-[#2a82b8]">
          {title}
          <svg width="15" height="11" viewBox="0 0 15 11" aria-hidden="true">
            <path d="M0 0h4l3.500 6L11 0h4L7.500 11z" fill="#2a82b8" />
          </svg>
        </button>
      ))}
      <div className="h-1.5 shrink-0" />
    </section>
  );
}

/* ---------- graphics window ---------- */

function Hole({ cx, cy }: { cx: number; cy: number }) {
  return (
    <g>
      <ellipse cx={cx} cy={cy} rx="16.500" ry="9" fill="#2550a4" />
      <path d={`M${cx - 7} ${cy - 8}q9-2 17 2l5 5-3 6-19 1z`} fill="#1e3b78" />
      <path d={`M${cx - 10} ${cy + 6.5}q9-4 20 0-9 4-20 0z`} fill="#4d88ff" />
      <path d={`M${cx - 4} ${cy + 7}h4M${cx + 3} ${cy + 5.5}h4M${cx + 11} ${cy + 3}h3`} stroke="#a2976e" strokeWidth="2.500" />
    </g>
  );
}

function GraphicsWindow() {
  return (
    <main className="min-w-0 flex-1 bg-linear-to-b from-[#b3b4b5] to-[#e7e8ea] to-75%">
      <svg viewBox="371 199 955 808" preserveAspectRatio="xMinYMin slice" className="block h-full w-full" aria-label="model2.prt">
        <defs>
          <linearGradient id="brass" x1="0" x2="1" y1="0" y2="0">
            <stop offset="0" stopColor="#cfa32a" />
            <stop offset=".5" stopColor="#9c852c" />
            <stop offset="1" stopColor="#cba62c" />
          </linearGradient>
          <clipPath id="front">
            <path d="M500 687L1104 740l16 197L500 881z" />
          </clipPath>
          <clipPath id="side">
            <path d="M1104 740l154-333 17 198-155 332z" />
          </clipPath>
          <filter id="soft" x="-5%" y="-5%" width="110%" height="110%">
            <feGaussianBlur stdDeviation="8" />
          </filter>
        </defs>

        {/* cutter */}
        <path d="M950 298l10 6 9-6z" fill="#a8942c" />
        <path d="M936 199h33l7.500 90a17 9 0 0 1-33 2z" fill="url(#brass)" />
        <ellipse cx="960" cy="290" rx="16.500" ry="9" fill="#bfab30" stroke="#2c2814" strokeWidth="1" />
        <path d="M960 291l13-5q4 5-4 9z" fill="#cf9f2c" />

        {/* block */}
        <path d="M500 677L1104 730v10L500 687z" fill="#005675" />
        <path d="M1104 730l154-331v8l17 198-155 332-16-197z" fill="#0088bb" />
        <path d="M673 346l585 53-154 332L515 678z" fill="#00ccff" />
        <path d="M500 687L1104 740l16 197L500 881z" fill="#005675" />

        <g clipPath="url(#front)">
          <g transform="translate(620 680) scale(.3333)" fill="#525a5c" filter="url(#soft)">
            <path d="M62 100l78 50 18 60-38 70 40 130-75 42-55-2 10-160-18-25 28-65z" />
            <path d="M275 70l55 8 25 77-55 57-30-32z" />
            <path d="M310 220l70 20 65 130-45 65-80 33-55-13-15-45 20-110z" />
            <path d="M150 440l10-30 90 20-60 55 45 70-95 100-66-4 76-101-15-60z" />
            <path d="M395 440l105 15-5 53 23 72-78 105-130-10 75-95z" />
            <path d="M522 95l33 8 70 222 80 20-43 45 78 210-5 20-65 85-140-10 80-105 5-108-45-2-75 28 25-128-20-25z" />
            <path d="M770 115l95 75 30 85-45 65 35 80 80 40v55l-25 35 25 70-70 105-150-20 85-55 28-50-8-85-20 10-95 3 17-168-27-40 40-120z" />
            <path d="M990 130l65 10 35 90 85 210-30 50 60 10 20-60-13-40 28-245 215 15 50 605-270-20 75-110 15-90-35 5-50 20 30 75-75 95-195-20 75-100 30-110-65 33-55-3-20-30v-65l43-165-33-35z" />
            <path d="M1335 195l95-5-80 140-40-85z" fill="#005675" />
          </g>
        </g>

        <g clipPath="url(#side)">
          <g transform="translate(1080 380) scale(.3333 .364)" fill="#809195">
            <path d="M128 875l62-135-10 140-50 330-29 100-17-165z" />
            <path d="M236 662l68-140-30 260-58 440-34 100-11-70 47-320-11-50z" />
            <path d="M340 460l72-145-12 110-28 190-18 70-48 330-16 95-12-70 46-320-10-50z" />
            <path d="M447 250l87-175-22 110-52 320-30 175-24 160-10 62-12-72 44-310-11-55z" />
            <path d="M549 255l15 160-24 75-16 110-24 120-1-35 16-115-11-47z" />
          </g>
        </g>

        <path d="M500 687L1104 740l154-333M1104 740l16 197L500 881M1120 937l155-332-17-198" fill="none" stroke="#22303a" strokeWidth="1" />
        <path d="M1104 733l154-332" fill="none" stroke="#0088bb" strokeWidth="3" />
        <g fill="none" stroke="#3f5cf8" strokeWidth="2">
          <path d="M500 682.500L1104 737 1258 404" />
          <path d="M995.500 262L970 372" />
          <path d="M1188 668l32 14 34.500 21" />
          <path d="M770 723q17-1 23-5 13-5 18-11" />
        </g>
        <Hole cx={977.5} cy={504} />
        <Hole cx={780.5} cy={578} />
      </svg>
    </main>
  );
}

/* ---------- tool path visualization dialog ---------- */

const pathLines = [
  'Sequence Number/Status=User Defined,Number',
  'GOTO/25.893,25.893,30.000',
  'CYCLE/DRILL,RAPTO,3.000,FEDTO,-3.000,MMPM',
  'GOTO/25.893,25.893,0.000',
  'GOTO/45.339,45.339,0.000',
  'CYCLE/OFF',
];

function Chevron({ d }: { d: string }) {
  return (
    <svg width="10" height="10" viewBox="0 0 10 10" aria-hidden="true">
      <path d={d} fill="none" stroke="#505050" strokeWidth="2" />
    </svg>
  );
}

function PathListing() {
  return (
    <div className="mr-2.5 ml-[11px] grid h-[148px] shrink-0 grid-cols-[1fr_20px] grid-rows-[1fr_20px] border border-[#adadad] bg-white p-px">
      <div className="flex min-w-0 flex-col overflow-hidden text-[14px] leading-5 whitespace-nowrap">
        {pathLines.map((line, i) => <div key={i} className="shrink-0">{line}</div>)}
        <div className="h-[3px] shrink-0 bg-[#3399ff]" />
      </div>
      <div className="flex flex-col items-center bg-[#f0f0f0]">
        <button className="flex h-5 items-center" aria-label="위로"><Chevron d="M0 7l5-5 5 5" /></button>
        <span className="h-[61px] w-[19px] bg-[#cdcdcd]" />
        <button className="mt-auto flex h-5 items-center" aria-label="아래로"><Chevron d="M0 2l5 5 5-5" /></button>
      </div>
      <div className="flex items-center bg-[#f0f0f0]">
        <button className="flex w-[21px] justify-center" aria-label="왼쪽"><Chevron d="M7 0L2 5l5 5" /></button>
        <span className="h-[19px] w-[133px] bg-[#cdcdcd]" />
        <button className="ml-auto flex w-[21px] justify-center" aria-label="오른쪽"><Chevron d="M2 0l5 5-5 5" /></button>
      </div>
      <div className="bg-[#f0f0f0]" />
    </div>
  );
}

const sliderClass =
  'mr-[19px] ml-[19px] block h-1 appearance-none bg-[#adadad] [&::-webkit-slider-thumb]:h-[22px] [&::-webkit-slider-thumb]:w-[15px] [&::-webkit-slider-thumb]:-translate-y-[5px] [&::-webkit-slider-thumb]:appearance-none [&::-webkit-slider-thumb]:border [&::-webkit-slider-thumb]:border-[#5c6462] [&::-webkit-slider-thumb]:bg-[#a5bfbb]';

interface DropDownProps {
  id: string;
  label: ReactNode;
  value: string;
  className: string;
  disabled?: boolean;
}

function DropDown({ id, label, value, className, disabled }: DropDownProps) {
  return (
    <div className="flex h-[28px] items-center justify-between">
      <label htmlFor={id} className={clsx(disabled && 'text-[#a8a8a8]')}>{label}</label>
      <div className={clsx('relative', className)}>
        <select
          id={id}
          disabled={disabled}
          className={clsx('block h-7 w-full appearance-none border border-[#adadad] bg-white pl-[5px]', disabled && 'text-[#909090] opacity-100')}
        >
          <option>{value}</option>
        </select>
        <Caret muted={disabled} className="pointer-events-none absolute top-3 right-[7px]" />
      </div>
    </div>
  );
}

function PushButton({ children, className, disabled }: { children: ReactNode; className?: string; disabled?: boolean }) {
  return (
    <button
      disabled={disabled}
      className={clsx('h-8 border text-center', disabled ? 'border-[#d0d0d0] text-[#b5b5b5]' : 'border-[#adadad]', className)}
    >
      {children}
    </button>
  );
}

interface CheckProps {
  id: string;
  checked: boolean;
  onChange: (value: boolean) => void;
  children: ReactNode;
}

function Check({ id, checked, onChange, children }: CheckProps) {
  return (
    <div className="relative flex h-[26px] items-center gap-1">
      <input
        id={id}
        type="checkbox"
        checked={checked}
        onChange={e => onChange(e.target.checked)}
        className="h-[18px] w-[18px] appearance-none border border-[#333] bg-white"
      />
      {checked && (
        <svg width="14" height="10" viewBox="0 0 14 10" className="pointer-events-none absolute top-2 left-0.5" aria-hidden="true">
          <path d="M1 5l4 4 8-8" fill="none" stroke="#333" strokeWidth="1.600" />
        </svg>
      )}
      <label htmlFor={id}>{children}</label>
    </div>
  );
}

const Rule = () => <div className="h-px bg-[#d2d2d2]" />;

const playback = [
  { label: '처음으로', bar: 'M6 8v15', art: 'M17 8v15l-8-7.500zM26 8v15l-8-7.500z' },
  { label: '이전 오퍼레이션', bar: 'M11 8v15', art: 'M21 8v15l-8-7.500z' },
  { label: '뒤로 재생', bar: '', art: 'M19 8v15l-8-7.500z' },
  { label: '앞으로 재생', bar: '', art: 'M12 8v15l8-7.500z' },
  { label: '다음 오퍼레이션', bar: 'M20 8v15', art: 'M10 8v15l8-7.500z' },
  { label: '끝으로', bar: 'M24 8v15', art: 'M5 8v15l8-7.500zM14 8v15l8-7.500z' },
];

function VisualizationDialog() {
  const [motion, setMotion] = useState(1);
  const [speed, setSpeed] = useState(3);
  const [solid, setSolid] = useState('ipw');
  const [collision, setCollision] = useState(true);
  const [holder, setHolder] = useState(true);
  const [suppress, setSuppress] = useState(false);

  const solids: { id: string; label: ReactNode }[] = [
    { id: 'ipw', label: <Latin>IPW</Latin> },
    { id: 'gouge', label: '가우즈' },
    { id: 'excess', label: '초과' },
  ];

  return (
    <div role="dialog" aria-label="공구 경로 시각화" className="absolute top-0 left-[258px] flex w-[369px] flex-col border border-t-0 border-[#b9b9b9] bg-[#e8e8e8] pb-2.5 text-[16px] leading-6">
      <header className="-mx-px mb-2 flex h-[27px] shrink-0 items-center bg-[#5a877e] pr-2.5 pl-[9px] text-white">
        <Icon size={16}>
          <circle cx="12" cy="12" r="7" stroke="#fff" strokeWidth="4" />
          <circle cx="12" cy="12" r="2" fill="#fff" stroke="none" />
          <path d="M12 0v4M12 20v4M0 12h4M20 12h4M3 3l3 3M18 18l3 3M21 3l-3 3M6 18l-3 3" stroke="#fff" strokeWidth="4" />
        </Icon>
        <h2 className="ml-2.5">공구 경로 시각화</h2>
        <button className="ml-auto" aria-label="닫기">
          <svg width="12" height="12" viewBox="0 0 12 12" aria-hidden="true">
            <path d="M1 1l10 10M11 1L1 11" stroke="#fff" strokeWidth="2" />
          </svg>
        </button>
      </header>

      <PathListing />

      <div className="mt-0.5 px-[18px] text-[14px]">{motion}</div>
      <input type="range" aria-label="모션" min={1} max={2} value={motion} onChange={e => setMotion(Number(e.target.value))} className={clsx(sliderClass, 'mt-[15px]')} />
      <div className="mt-1 flex justify-between pr-[9px] pl-[14px] text-[14px]">
        <span>1</span>
        <span>2</span>
      </div>

      <p className="mt-px pl-2.5">이송률 <Latin>0.000000</Latin></p>

      <div className="mt-px flex h-[33px] items-end pl-[11px]" role="tablist">
        <button role="tab" className="h-[30px] w-[56px] border border-r-0 border-b-0 border-[#d2d2d2] pl-1">재생</button>
        <button role="tab" aria-selected="true" className="relative z-10 -mb-px h-[34px] w-[74px] border border-b-0 border-[#b9b9b9] bg-white text-[#2a82b8]">
          <Latin>3D</Latin> 동적
        </button>
        <button role="tab" className="h-[30px] w-[68px] border border-b-0 border-l-0 border-[#d2d2d2]">
          <Latin>2D</Latin> 동적
        </button>
      </div>

      <div className="mr-[9px] ml-[9px] flex flex-col border border-[#b9b9b9] bg-white px-1.5 pt-1 pb-1">
        <div className="flex flex-col gap-0.5">
          <DropDown id="display" label="공구 디스플레이" value="공구" className="w-[121px]" />
          <DropDown id="path" label="공구 경로" value="없음" className="w-[136px]" />
          <DropDown id="resolution" label={<><Latin>IPW</Latin> 해상도</>} value="중간" className="w-[96px]" disabled />
          <PushButton>디스플레이 옵션</PushButton>
          <Rule />
        </div>
        <div className="mt-[3px]">
          <DropDown id="ipw-mode" label={<Latin>IPW</Latin>} value="없음" className="w-[226px]" />
        </div>
        <fieldset className="mt-0.5 ml-12 flex h-[54px] w-[239px] flex-col border-r border-b border-[#d8d8d8] pl-[5px]">
          <legend className="float-left pl-1 text-[20px] leading-[26px] text-[#2a82b8]">파셋화된 솔리드</legend>
          <div className="flex h-6 items-center">
            {solids.map(item => (
              <span key={item.id} className="flex w-[77px] shrink-0 items-center gap-1 whitespace-nowrap">
                <input
                  id={item.id}
                  type="radio"
                  name="solid"
                  checked={solid === item.id}
                  onChange={() => setSolid(item.id)}
                  className="h-[18px] w-[18px] shrink-0 appearance-none rounded-full border border-[#333] bg-white bg-clip-content p-[2px] checked:bg-[#333]"
                />
                <label htmlFor={item.id}>{item.label}</label>
              </span>
            ))}
          </div>
        </fieldset>
        <div className="mt-1 mr-1 flex gap-0.5">
          <PushButton className="flex-1">생성</PushButton>
          <PushButton className="flex-1" disabled>삭제</PushButton>
          <button className="h-8 flex-1 border border-[#fbd77c] bg-[#fdf4d9] text-[#2a82b8]">해석</button>
        </div>
        <PushButton className="mt-1 mr-0.5">색상 별로 두께 표시</PushButton>
        <div className="mt-1 mb-0.5"><Rule /></div>
        <Check id="collision" checked={collision} onChange={setCollision}><Latin>IPW</Latin> 충돌 체크</Check>
        <Check id="holder" checked={holder} onChange={setHolder}>공구 및 홀더 체크</Check>
        <div className="mt-px mr-[3px] mb-1 flex gap-0.5">
          <PushButton className="flex-1" disabled>충돌 설정값</PushButton>
          <PushButton className="flex-1" disabled>리스트</PushButton>
        </div>
        <Rule />
        <PushButton className="mt-[3px] mb-0.5">재설정</PushButton>
        <Rule />
        <div className="mt-0.5">
          <Check id="suppress" checked={suppress} onChange={setSuppress}>애니메이션 억제</Check>
        </div>
      </div>

      <label htmlFor="speed" className="mt-0.5 pl-2.5">애니메이션 속도</label>
      <div className="mt-0.5 pl-[89px] text-[14px]">{speed}</div>
      <input id="speed" type="range" min={1} max={10} value={speed} onChange={e => setSpeed(Number(e.target.value))} className={clsx(sliderClass, 'mt-[15px]')} />
      <div className="mt-1 flex justify-between pr-[9px] pl-[14px] text-[14px]">
        <span>1</span>
        <span>10</span>
      </div>

      <div className="mt-px mr-0.5 flex justify-center gap-0.5">
        {playback.map(item => (
          <button key={item.label} aria-label={item.label} className="h-8 w-8 border border-[#adadad]">
            <svg width="30" height="30" viewBox="0 0 31 31" aria-hidden="true">
              <path d={item.bar} stroke="#00008b" strokeWidth="2" />
              <path d={item.art} fill="#800000" />
            </svg>
          </button>
        ))}
        <button disabled aria-label="중지" className="flex h-8 w-8 items-center justify-center border border-[#d2d2d2]">
          <span className="h-3 w-3 bg-[#a48c8c]" />
        </button>
      </div>

      <div className="mt-3 mr-[15px] flex justify-end gap-[5px]">
        <button className="h-7 w-[60px] border border-[#4aa0d0] bg-[#9ccbe6]">확인</button>
        <button className="h-7 w-[60px] border border-[#adadad] bg-[#c9cacf]">취소</button>
      </div>
    </div>
  );
}

export default function App() {
  return (
    <div className="relative flex h-screen flex-col overflow-hidden bg-white font-['Open_Sans','Noto_Sans_CJK_KR',sans-serif] text-[#1a1a1a]">
      <TitleBar />
      <RibbonTabs />
      <Ribbon />
      <SelectionBar />
      <div className="flex min-h-0 flex-1">
        <ResourceBar />
        <OperationNavigator />
        <GraphicsWindow />
      </div>
      <footer className="flex h-1.5 shrink-0 overflow-hidden border-t border-[#a8a8a8] pl-2 text-[16px] leading-5 font-bold whitespace-nowrap text-black">
        <span className="w-[909px] shrink-0">객체 또는 재생 을 선택하여 공구 경로 재생 시작</span>
        <span>없음</span>
      </footer>
      <VisualizationDialog />
    </div>
  );
}
